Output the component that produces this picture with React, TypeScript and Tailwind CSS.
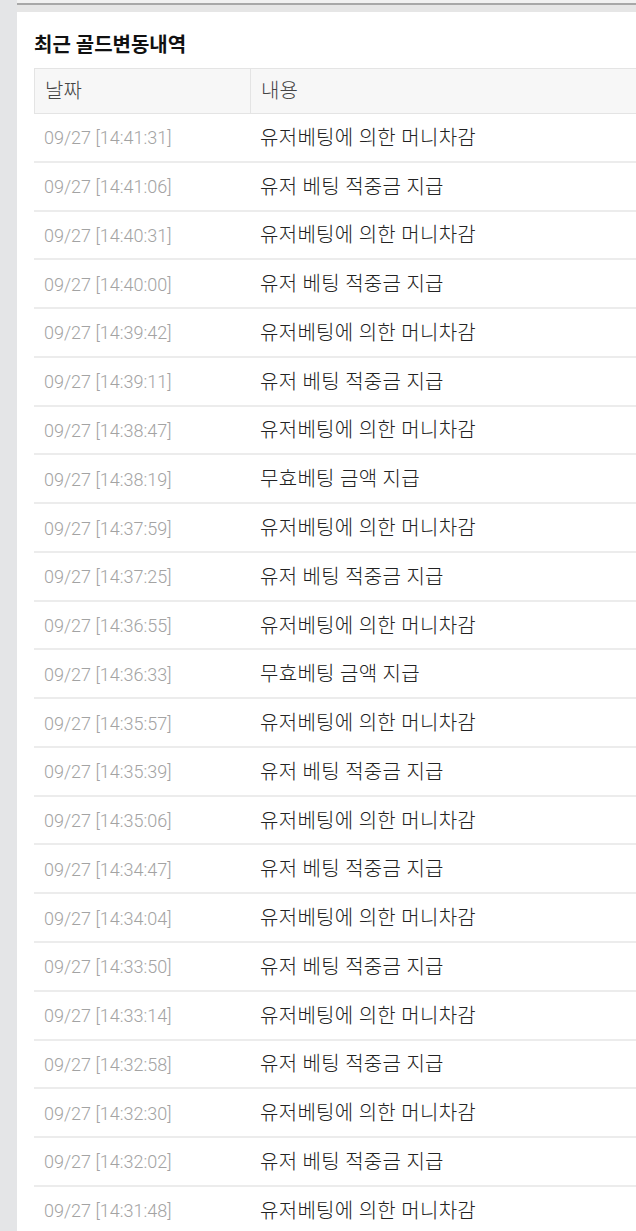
const rows: [string, string][] = [
  ["09/27 [14:41:31]", "유저베팅에 의한 머니차감"],
  ["09/27 [14:41:06]", "유저 베팅 적중금 지급"],
  ["09/27 [14:40:31]", "유저베팅에 의한 머니차감"],
  ["09/27 [14:40:00]", "유저 베팅 적중금 지급"],
  ["09/27 [14:39:42]", "유저베팅에 의한 머니차감"],
  ["09/27 [14:39:11]", "유저 베팅 적중금 지급"],
  ["09/27 [14:38:47]", "유저베팅에 의한 머니차감"],
  ["09/27 [14:38:19]", "무효베팅 금액 지급"],
  ["09/27 [14:37:59]", "유저베팅에 의한 머니차감"],
  ["09/27 [14:37:25]", "유저 베팅 적중금 지급"],
  ["09/27 [14:36:55]", "유저베팅에 의한 머니차감"],
  ["09/27 [14:36:33]", "무효베팅 금액 지급"],
  ["09/27 [14:35:57]", "유저베팅에 의한 머니차감"],
  ["09/27 [14:35:39]", "유저 베팅 적중금 지급"],
  ["09/27 [14:35:06]", "유저베팅에 의한 머니차감"],
  ["09/27 [14:34:47]", "유저 베팅 적중금 지급"],
  ["09/27 [14:34:04]", "유저베팅에 의한 머니차감"],
  ["09/27 [14:33:50]", "유저 베팅 적중금 지급"],
  ["09/27 [14:33:14]", "유저베팅에 의한 머니차감"],
  ["09/27 [14:32:58]", "유저 베팅 적중금 지급"],
  ["09/27 [14:32:30]", "유저베팅에 의한 머니차감"],
  ["09/27 [14:32:02]", "유저 베팅 적중금 지급"],
  ["09/27 [14:31:48]", "유저베팅에 의한 머니차감"],
];

const App = () => {
  return (
    <div className="flex min-h-screen h-[1231px] overflow-hidden bg-[#e4e5e7] font-['Roboto','Noto_Sans_CJK_KR',sans-serif]">
      <div className="w-[17px] shrink-0" />

      <div className="flex min-w-0 flex-1 flex-col">
        {/* top bar edge */}
        <div className="h-[3px] bg-[#f1f1f1]" />
        <div className="h-[2px] bg-[#a8a8a8]" />
        <div className="h-[7px] bg-[#e6e6e6]" />

        <main className="flex-1 overflow-hidden bg-white pl-[17px] pt-[19px]">
          <h2 className="mb-[9px] h-[28px] text-[20px] font-bold leading-[28px] text-[#111]">
            최근 골드변동내역
          </h2>

          <div className="w-[640px]">
            <div className="grid h-[46px] grid-cols-[216px_1fr] border border-[#e4e4e4] bg-[#f7f7f7] text-[20px] font-light text-[#444]">
              <div className="flex items-center border-r border-[#e4e4e4] pl-[10px]">날짜</div>
              <div className="flex items-center pl-[10px]">내용</div>
            </div>

            {rows.map(([date, text], i) => (
              <div
                key={i}
                className="grid h-[48.78px] grid-cols-[216px_1fr] border-b-2 border-[#ececec]"
              >
                <div className="flex items-center pt-[1px] pl-[10px] text-[18px] font-light text-[#a3a3a3]">
                  {date}
                </div>
                <div className="flex items-center pt-[1px] pl-[10px] text-[20px] font-light tracking-[0.3px] text-[#222]">
                  {text}
                </div>
              </div>
            ))}
          </div>
        </main>
      </div>
    </div>
  );
};

export default App;
